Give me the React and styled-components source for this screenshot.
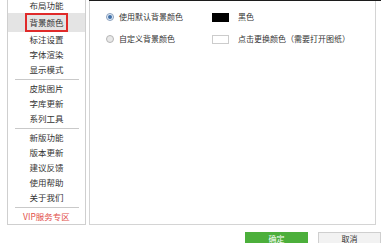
import React from 'react'
import styled, { createGlobalStyle } from 'styled-components'

const GlobalStyle = createGlobalStyle`
  html, body {
    margin: 0;
    padding: 0;
    background: #ffffff;
  }
  body {
    font-family: 'Noto Sans CJK SC', 'Noto Sans', sans-serif;
    color: #333333;
    overflow: hidden;
  }
  * {
    box-sizing: border-box;
  }
`

const menuGroups = [
  ['布局功能', '背景颜色', '标注设置', '字体渲染', '显示模式'],
  ['皮肤图片', '字库更新', '系列工具'],
  ['新版功能', '版本更新', '建议反馈', '使用帮助', '关于我们'],
]

const App = () => {
  return (
    <Window>
      <GlobalStyle />
      <Main>
        <Sidebar>
          <MenuList>
            {menuGroups.map((group, gi) => (
              <React.Fragment key={gi}>
                {gi > 0 && <Separator />}
                {group.map((label) =>
                  label === '背景颜色' ? (
                    <MenuItem key={label} active>
                      <ActiveLabel>{label}</ActiveLabel>
                    </MenuItem>
                  ) : (
                    <MenuItem key={label}>{label}</MenuItem>
                  )
                )}
              </React.Fragment>
            ))}
            <Separator />
            <MenuItem vip>VIP服务专区</MenuItem>
          </MenuList>
        </Sidebar>
        <RightColumn>
          <Panel>
            <OptionRow>
              <RadioLabel>
                <Radio checked />
                <span>使用默认背景颜色</span>
              </RadioLabel>
              <Swatch color="#000000" />
              <Note>黑色</Note>
            </OptionRow>
            <OptionRow>
              <RadioLabel>
                <Radio />
                <span>自定义背景颜色</span>
              </RadioLabel>
              <Swatch color="#ffffff" />
              <Note>点击更换颜色（需要打开图纸）</Note>
            </OptionRow>
          </Panel>
        </RightColumn>
      </Main>
      <ButtonBar>
        <Button primary>确定</Button>
        <Button>取消</Button>
      </ButtonBar>
    </Window>
  )
}

const Window = styled.div`
  width: 381px;
  height: 243px;
  display: flex;
  flex-direction: column;
  overflow: hidden;
`
const Main = styled.div`
  display: flex;
  height: 225px;
`
const Sidebar = styled.div`
  width: 79px;
  margin-left: 7px;
  border: 1px solid #cfcfcf;
  border-top: none;
  overflow: hidden;
`
const MenuList = styled.div`
  display: flex;
  flex-direction: column;
  margin-top: -2px;
`
const MenuItem = styled.div`
  height: ${(p) => (p.active ? 19 : 15)}px;
  display: flex;
  align-items: center;
  justify-content: center;
  font-size: 8.5px;
  line-height: 1;
  color: ${(p) => (p.vip ? '#e2504a' : '#333333')};
  background: ${(p) => (p.active ? '#e4e4e4' : 'transparent')};
`
const ActiveLabel = styled.span`
  display: flex;
  align-items: center;
  height: 19px;
  padding: 0 2px;
  border: 2px solid #e02a2a;
`
const Separator = styled.div`
  height: 4px;
  margin: 0 6px 0 7px;
  display: flex;
  align-items: center;
  &::after {
    content: '';
    flex: 1;
    border-top: 1px solid #c9c9c9;
  }
`
const RightColumn = styled.div`
  flex: 1;
  margin-left: 3px;
  border-top: 1px solid #1c1c1c;
  display: flex;
`
const Panel = styled.div`
  flex: 1;
  margin-right: 5px;
  border: 1px solid #d4d4d4;
  border-top: none;
  padding: 5px 0 0 16px;
  display: flex;
  flex-direction: column;
`
const OptionRow = styled.div`
  height: 22px;
  display: flex;
  align-items: center;
  font-size: 8px;
  line-height: 1;
`
const RadioLabel = styled.div`
  width: 106px;
  display: flex;
  align-items: center;
  gap: 5px;
`
const Radio = styled.span`
  width: 8px;
  height: 8px;
  border-radius: 50%;
  border: 1px solid ${(p) => (p.checked ? '#8aa0bd' : '#b5b5b5')};
  background: ${(p) => (p.checked ? '#e6eef8' : '#e8e8e8')};
  display: flex;
  align-items: center;
  justify-content: center;
  &::after {
    content: '';
    width: 4px;
    height: 4px;
    border-radius: 50%;
    background: ${(p) => (p.checked ? '#3f6fa8' : 'transparent')};
  }
`
const Swatch = styled.span`
  width: 17px;
  height: 9px;
  margin-right: 9px;
  background: ${(p) => p.color};
  border: 1px solid ${(p) => (p.color === '#ffffff' ? '#cccccc' : '#000000')};
`
const Note = styled.span`
  white-space: nowrap;
`
const ButtonBar = styled.div`
  display: flex;
  justify-content: flex-end;
  gap: 10px;
  padding-top: 7px;
`
const Button = styled.div`
  width: 63px;
  height: 11px;
  display: flex;
  align-items: center;
  justify-content: center;
  font-size: 8px;
  line-height: 1;
  padding-top: 2px;
  color: ${(p) => (p.primary ? '#ffffff' : '#333333')};
  background: ${(p) => (p.primary ? '#4caf3b' : '#f2f2f2')};
  border: 1px solid ${(p) => (p.primary ? '#4caf3b' : '#cfcfcf')};
  border-bottom: none;
`

export default App
